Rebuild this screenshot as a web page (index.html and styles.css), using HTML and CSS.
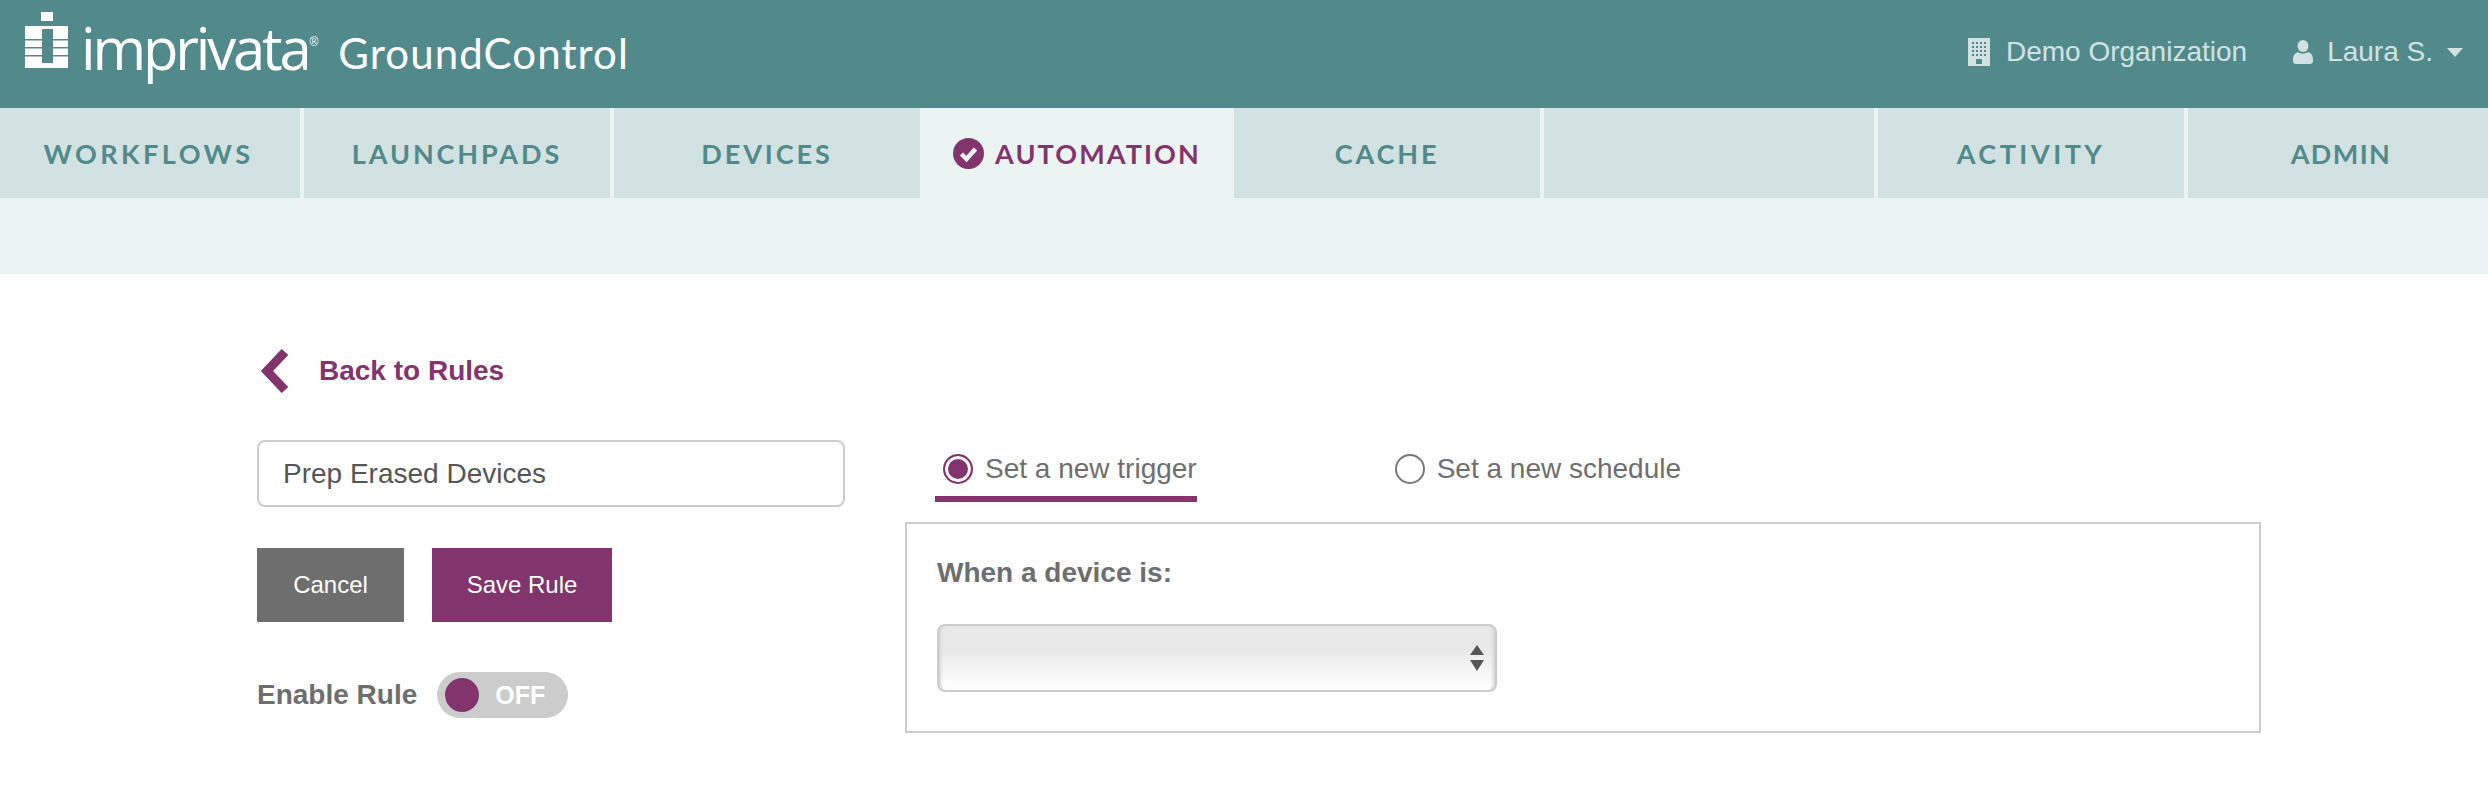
FILE: index.html
```html
<!DOCTYPE html>
<html lang="en">
<head>
<meta charset="utf-8">
<title>Imprivata GroundControl</title>
<link rel="stylesheet" href="styles.css">
</head>
<body>
<header class="topbar">
  <div class="brand">
    <svg class="logo-mark" width="43" height="57" viewBox="0 0 43 57" aria-hidden="true">
      <path fill="#fff" d="M16 0h12v9H16zM0 14h43v42H0z"/>
      <path fill="#528a8c" d="M17 17h11v34H17zM0 27h17v1.500H0zM28 27h15v1.500H28zM0 35h17v1.500H0zM28 35h15v1.500H28zM0 43h17v1.500H0zM28 43h15v1.500H28z"/>
    </svg>
    <span class="wordmark">imprivata</span><sup class="reg">®</sup>
    <span class="product">GroundControl</span>
  </div>
  <div class="account">
    <span class="account-item">
      <svg class="org-icon" width="22" height="28" viewBox="0 0 22 28" aria-hidden="true">
        <path fill="#d2e2e2" fill-rule="evenodd" d="M0 0h22v28H0zM4 4v2h2V4zM8 4v2h2V4zM12 4v2h2V4zM16 4v2h2V4zM4 8v2h2V8zM8 8v2h2V8zM12 8v2h2V8zM16 8v2h2V8zM4 12v2h2v-2zM8 12v2h2v-2zM12 12v2h2v-2zM16 12v2h2v-2zM4 16v2h2v-2zM8 16v2h2v-2zM12 16v2h2v-2zM16 16v2h2v-2zM8 21v5h6v-5z"/>
      </svg>
      Demo Organization
    </span>
    <span class="account-item user">
      <svg class="user-icon" width="20" height="24" viewBox="0 0 20 24" aria-hidden="true">
        <ellipse fill="#d2e2e2" cx="10" cy="6" rx="5.500" ry="6"/>
        <path fill="#d2e2e2" d="M0 20c0-5 2-7 5-8 3 2 7 2 10 0 3 1 5 3 5 8 0 3-1 4-3 4H3c-2 0-3-1-3-4z"/>
      </svg>
      Laura S.
      <svg class="caret" width="16" height="9" viewBox="0 0 16 9" aria-hidden="true"><path fill="#d2e2e2" d="M0 0h16L8 9z"/></svg>
    </span>
  </div>
</header>
<nav class="tabs">
  <a class="tab tab-first tab-loose">WORKFLOWS</a>
  <a class="tab">LAUNCHPADS</a>
  <a class="tab">DEVICES</a>
  <a class="tab tab-active">
    <svg class="tab-check" width="31" height="31" viewBox="0 0 31 31" aria-hidden="true">
      <circle cx="15.500" cy="15.500" r="15.500" fill="#82346d"/>
      <path d="M8.500 16l5 5 9-10" fill="none" stroke="#ebf3f3" stroke-width="4.500"/>
    </svg>
    AUTOMATION
  </a>
  <a class="tab">CACHE</a>
  <a class="tab tab-wide"></a>
  <a class="tab tab-loose">ACTIVITY</a>
  <a class="tab tab-last">ADMIN</a>
</nav>
<div class="subbar"></div>
<main class="page">
  <a class="back">
    <svg width="28" height="44" viewBox="0 0 28 44" aria-hidden="true"><path fill="none" stroke="#82346d" stroke-width="9" d="M24 3L6 22l18 19"/></svg>
    <span>Back to Rules</span>
  </a>
  <div class="editor">
    <section class="left">
      <input class="name" type="text" value="Prep Erased Devices">
      <div class="actions">
        <button class="btn btn-cancel" type="button">Cancel</button>
        <button class="btn btn-save" type="button">Save Rule</button>
      </div>
      <div class="enable">
        <span class="enable-label">Enable Rule</span>
        <span class="toggle"><span class="knob"></span><span class="toggle-text">OFF</span></span>
      </div>
    </section>
    <section class="right">
      <div class="modes">
        <label class="mode mode-on"><span class="radio radio-on"></span>Set a new trigger</label>
        <label class="mode"><span class="radio"></span>Set a new schedule</label>
      </div>
      <div class="panel">
        <h2 class="panel-label">When a device is:</h2>
        <div class="select-wrap">
          <select class="select"><option></option></select>
          <svg class="select-arrows" width="14" height="26" viewBox="0 0 14 26" aria-hidden="true"><path fill="#555" d="M7 0l7 10H0zM0 15h14L7 26z"/></svg>
        </div>
      </div>
    </section>
  </div>
</main>
</body>
</html>
```
FILE: styles.css
```css
* { box-sizing: border-box; }
html, body { margin: 0; padding: 0; background: #fff; }
body { font-family: "Liberation Sans", Arial, sans-serif; color: #6e6e6e; }

.topbar {
  height: 108px;
  background: #528a8c;
  display: flex;
  justify-content: space-between;
  align-items: center;
  padding: 0 25px;
}
.brand { display: flex; align-items: flex-start; height: 108px; color: #fff; }
.logo-mark { margin-top: 12px; flex: none; }
.wordmark {
  font-family: "Open Sans", sans-serif;
  font-size: 58px;
  line-height: 80px;
  margin: 8px 0 0 13px;
  letter-spacing: -3.2px;
}
.reg { font-family: "Liberation Sans", sans-serif; font-size: 12px; line-height: 14px; margin: 35px 0 0 1px; }
.product {
  font-family: "Lato", sans-serif;
  font-size: 42px;
  line-height: 50px;
  margin: 28px 0 0 20px;
  letter-spacing: 1.1px;
}
.account {
  display: flex;
  align-items: center;
  color: #d2e2e2;
  font-size: 28px;
  padding-bottom: 4px;
}
.account-item { display: flex; align-items: center; }
.org-icon { margin-right: 16px; }
.user { margin-left: 46px; }
.user-icon { margin-right: 14px; }
.caret { margin-left: 14px; }

.tabs { display: flex; height: 90px; background: #ebf3f3; }
.tab {
  flex: 0 0 310px;
  display: flex;
  align-items: center;
  justify-content: center;
  background: #d2e2e2;
  background-clip: padding-box;
  border-right: 4px solid #ebf3f3;
  font-family: "Lato", sans-serif;
  font-weight: 700;
  font-size: 27px;
  letter-spacing: 2.9px;
  color: #528a8c;
}
.tab-loose { letter-spacing: 3.5px; }
.tab-first { flex-basis: 304px; padding-right: 3px; }
.tab-wide { flex-basis: 334px; }
.tab-last { flex-basis: 300px; border-right: 0; padding-left: 6px; letter-spacing: 1.4px; }
.tab-active { background: #ebf3f3; color: #82346d; border-right: 0; padding-right: 4px; letter-spacing: 2.1px; }
.tab-check { margin-right: 11px; }

.subbar { height: 76px; background: #ebf3f3; }

.page { padding: 75px 0 0 257px; }
.back {
  display: flex;
  align-items: center;
  height: 44px;
  padding-left: 4px;
  color: #82346d;
  font-weight: 700;
  font-size: 28px;
}
.back span { margin-left: 30px; }
.editor { display: flex; margin-top: 47px; }
.left { width: 588px; flex: none; }
.name {
  display: block;
  width: 588px;
  height: 67px;
  border: 2px solid #ccc;
  border-radius: 8px;
  padding: 0 24px;
  font: 28px "Liberation Sans", Arial, sans-serif;
  color: #555;
  background: #fff;
  outline: 0;
}
.actions { display: flex; gap: 28px; margin-top: 41px; }
.btn {
  height: 74px;
  border: 0;
  color: #fff;
  font: 24px "Liberation Sans", Arial, sans-serif;
  padding: 0;
}
.btn-cancel { width: 147px; background: #6e6e6e; }
.btn-save { width: 180px; background: #82346d; }
.enable { display: flex; align-items: center; margin-top: 50px; }
.enable-label { font-weight: 700; font-size: 28px; }
.toggle {
  display: flex;
  align-items: center;
  width: 131px;
  height: 46px;
  margin-left: 20px;
  padding-left: 8px;
  border-radius: 23px;
  background: #ccc;
}
.knob { width: 34px; height: 34px; border-radius: 50%; background: #82346d; }
.toggle-text { margin-left: 16px; color: #fff; font-weight: 700; font-size: 25px; }

.right { margin-left: 60px; width: 1356px; flex: none; }
.modes { display: flex; height: 62px; align-items: flex-end; padding-left: 30px; }
.mode {
  display: flex;
  align-items: center;
  height: 57px;
  padding: 0 0 0 8px;
  font-size: 28px;
}
.mode-on { border-bottom: 6px solid #82346d; padding-bottom: 4px; margin-right: 190px; }
.mode:not(.mode-on) { padding-bottom: 10px; }
.radio {
  width: 30px;
  height: 30px;
  margin-right: 12px;
  border: 2px solid #777;
  border-radius: 50%;
  background: #fff;
}
.radio-on {
  border-color: #82346d;
  background: #82346d;
  box-shadow: inset 0 0 0 3px #fff;
}
.panel {
  margin-top: 20px;
  height: 211px;
  border: 2px solid #ccc;
  padding: 30px;
}
.panel-label { margin: 0; font-size: 28px; font-weight: 700; line-height: 38px; }
.select-wrap { position: relative; width: 560px; height: 68px; margin-top: 32px; }
.select {
  display: block;
  width: 100%;
  height: 100%;
  appearance: none;
  border: 2px solid #ccc;
  border-radius: 8px;
  background: linear-gradient(#e8e8e8 0, #e8e8e8 35%, #fbfbfb 85%, #fff 100%);
  box-shadow: inset 4px 0 3px -2px #d4d4d4, inset -4px 0 3px -2px #d4d4d4;
}
.select-arrows { position: absolute; right: 13px; top: 21px; }
```
